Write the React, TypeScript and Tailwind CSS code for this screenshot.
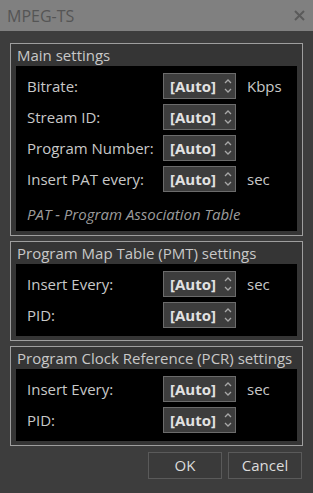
import { ReactNode } from "react"

const font = { fontFamily: '"Open Sans", "Noto Sans", sans-serif' }

function Spin() {
  return (
    <div className="flex items-center w-[73px] h-[26px] border border-[#6b6b6b] bg-[#3d3d3d] pl-[6px] pr-[2px]">
      <span className="flex-1 text-[15px] font-bold text-[#e2e2e2] leading-none">[Auto]</span>
      <svg width="10" height="18" viewBox="0 0 10 18" className="text-[#a8a8a8]">
        <path d="M2 6 L5 3 L8 6" fill="none" stroke="currentColor" strokeWidth="1.3" />
        <path d="M2 12 L5 15 L8 12" fill="none" stroke="currentColor" strokeWidth="1.3" />
      </svg>
    </div>
  )
}

function Row({ label, unit }: { label: string; unit?: string }) {
  return (
    <div className="flex items-center h-[26px]">
      <span className="w-[147px] pl-[11px] text-[15px] text-[#c8c8c8]">{label}</span>
      <Spin />
      {unit && <span className="ml-[11px] text-[15px] text-[#c8c8c8]">{unit}</span>}
    </div>
  )
}

function Group({ title, h, children }: { title: string; h: string; children: ReactNode }) {
  return (
    <div className="border border-[#9e9e9e] bg-[#353535] px-[5px] pb-[4px]">
      <div className="h-[22px] flex items-center pl-[1px] text-[15px] text-[#c8c8c8] leading-none">{title}</div>
      <div className={`${h} bg-black flex flex-col gap-[5px] pt-[7px]`}>{children}</div>
    </div>
  )
}

export default function App() {
  return (
    <div className="w-[313px] h-[493px] bg-[#3d3d3d] flex flex-col" style={font}>
      <div className="h-[31px] bg-[#808080] flex items-center justify-between pl-[7px] pr-[8px]">
        <span className="text-[16px] text-[#555555]">MPEG-TS</span>
        <svg width="11" height="11" viewBox="0 0 11 11">
          <path d="M1 1 L10 10 M10 1 L1 10" stroke="#5a5a5a" strokeWidth="2" />
        </svg>
      </div>
      <div className="flex flex-col gap-[5px] pl-[10px] pr-[10px] pt-[12px]">
        <Group title="Main settings" h="h-[165px]">
          <Row label="Bitrate:" unit="Kbps" />
          <Row label="Stream ID:" />
          <Row label="Program Number:" />
          <Row label="Insert PAT every:" unit="sec" />
          <div className="pl-[11px] mt-[6px] text-[15px] italic text-[#9c9c9c]">PAT - Program Association Table</div>
        </Group>
        <Group title="Program Map Table (PMT) settings" h="h-[72px]">
          <Row label="Insert Every:" unit="sec" />
          <Row label="PID:" />
        </Group>
        <Group title="Program Clock Reference (PCR) settings" h="h-[72px]">
          <Row label="Insert Every:" unit="sec" />
          <Row label="PID:" />
        </Group>
      </div>
      <div className="flex justify-end gap-[6px] pr-[11px] mt-[6px]">
        <button className="w-[74px] h-[27px] border border-[#5a5a5a] bg-[#3a3a3a] text-[15px] text-[#dcdcdc]">OK</button>
        <button className="w-[74px] h-[27px] border border-[#5a5a5a] bg-[#3a3a3a] text-[15px] text-[#dcdcdc]">Cancel</button>
      </div>
    </div>
  )
}
